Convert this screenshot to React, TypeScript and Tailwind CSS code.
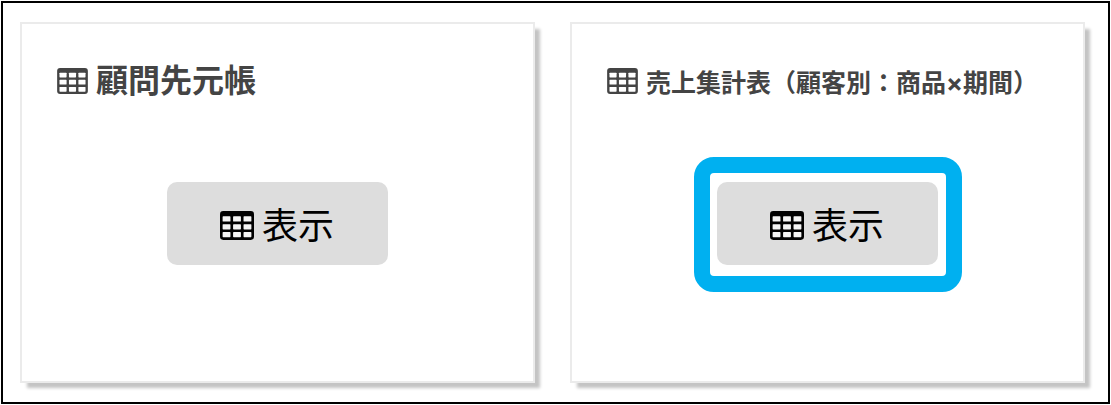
type Report = {
  title: string;
  titleSize: string;
  highlighted: boolean;
};

const reports: Report[] = [
  { title: "顧問先元帳", titleSize: "text-[32px]", highlighted: false },
  {
    title: "売上集計表（顧客別：商品×期間）",
    titleSize: "text-[25px] pt-1",
    highlighted: true,
  },
];

const columns = [2, 10, 18];
const rows = [4, 10, 16];

function TableIcon({ className, cell }: { className: string; cell: string }) {
  return (
    <svg viewBox="0 0 26 22" className={className} aria-hidden="true">
      <rect width="26" height="22" rx="2.5" fill="currentColor" />
      {rows.map((y) =>
        columns.map((x) => (
          <rect
            key={`${x}-${y}`}
            x={x}
            y={y}
            width="6"
            height="4"
            rx="0.5"
            className={cell}
          />
        ))
      )}
    </svg>
  );
}

function ReportCard({ report }: { report: Report }) {
  return (
    <section className="flex flex-col items-center border-2 border-[#ebebeb] bg-white pt-[37px] pb-[89px] shadow-[6px_6px_3px_-1px_#c4c4c4]">
      <h2 className="flex h-10 items-center gap-2 self-stretch pl-[35px] font-bold text-[#444]">
        <TableIcon className="w-[31px] h-[26px] shrink-0" cell="fill-white" />
        <span className={`leading-10 whitespace-nowrap ${report.titleSize}`}>
          {report.title}
        </span>
      </h2>

      <div
        className={`mt-14 border-16 rounded-[20px] pl-[7px] pr-2 pt-[9px] pb-[11px] ${
          report.highlighted ? "border-[#00b0f0]" : "border-transparent"
        }`}
      >
        <button
          type="button"
          className="flex items-center justify-center gap-2 w-[221px] h-[83px] pt-1 rounded-[10px] bg-[#ddd] text-[36px] text-black"
        >
          <TableIcon className="w-[34px] h-[29px]" cell="fill-[#f4f4f4]" />
          表示
        </button>
      </div>
    </section>
  );
}

export default function App() {
  return (
    <div className="bg-white p-px font-['Inter','Noto_Sans_CJK_JP',sans-serif]">
      <main className="grid grid-cols-2 gap-[35px] border-2 border-black pl-[17px] pr-[23px] py-[19px]">
        {reports.map((report) => (
          <ReportCard key={report.title} report={report} />
        ))}
      </main>
    </div>
  );
}
